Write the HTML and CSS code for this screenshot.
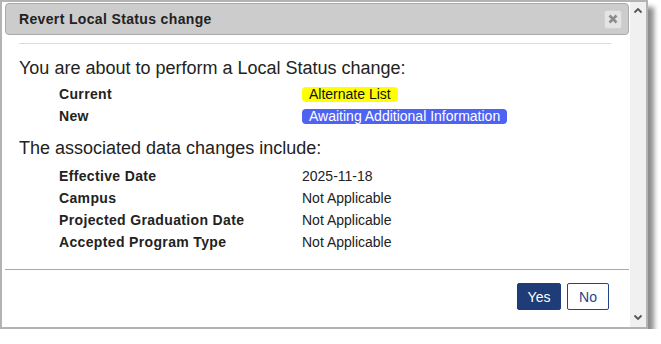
FILE: index.html
```html
<!DOCTYPE html>
<html>
<head>
<meta charset="utf-8">
<link rel="stylesheet" href="styles.css">
</head>
<body>
<div class="window">
  <div class="dialog">
    <div class="titlebar">
      <span class="title">Revert Local Status change</span>
      <span class="close"><svg width="10" height="10" viewBox="0 0 10 10"><path d="M1.5 1.5 L8.5 8.5 M8.5 1.5 L1.5 8.5" stroke="#8c8c8c" stroke-width="2.6" stroke-linecap="butt"/></svg></span>
    </div>
    <div class="body">
      <div class="sep-top"></div>
      <p class="heading">You are about to perform a Local Status change:</p>
      <div class="rows">
        <div class="label">Current</div><div class="value"><span class="badge badge-yellow">Alternate List</span></div>
        <div class="label">New</div><div class="value"><span class="badge badge-blue">Awaiting Additional Information</span></div>
      </div>
      <p class="heading heading-2">The associated data changes include:</p>
      <div class="rows rows-2">
        <div class="label">Effective Date</div><div class="value">2025-11-18</div>
        <div class="label">Campus</div><div class="value">Not Applicable</div>
        <div class="label">Projected Graduation Date</div><div class="value">Not Applicable</div>
        <div class="label">Accepted Program Type</div><div class="value">Not Applicable</div>
      </div>
    </div>
    <div class="sep-bottom"></div>
    <div class="footer">
      <button class="btn btn-primary">Yes</button>
      <button class="btn btn-default">No</button>
    </div>
  </div>
  <div class="scrollbar">
    <svg width="10" height="7" viewBox="0 0 10 7"><polyline points="1.5,5.5 5,2 8.5,5.5" fill="none" stroke="#555" stroke-width="1.8"/></svg>
    <svg width="10" height="7" viewBox="0 0 10 7"><polyline points="1.5,1.5 5,5 8.5,1.5" fill="none" stroke="#555" stroke-width="1.8"/></svg>
  </div>
</div>
</body>
</html>
```

FILE: styles.css
```css
html, body {
  margin: 0;
  padding: 0;
  background: #fff;
}
body {
  font-family: "Liberation Sans", Arial, sans-serif;
  color: #222;
}
.window {
  width: 648px;
  height: 329px;
  box-sizing: border-box;
  border: 2px solid #b3b3b3;
  display: flex;
  background: #fff;
  box-shadow: 6px 7px 5px rgba(0, 0, 0, 0.45);
}
.dialog {
  flex: 1;
  display: flex;
  flex-direction: column;
  min-width: 0;
}
.titlebar {
  margin: 1px 1px 0 3px;
  height: 32px;
  box-sizing: border-box;
  background: #cccccc;
  border: 1px solid #aaaaaa;
  border-radius: 4px;
  display: flex;
  align-items: center;
  justify-content: space-between;
  padding: 0 6px 0 13px;
}
.title {
  font-weight: bold;
  font-size: 14px;
  letter-spacing: 0.35px;
  color: #222;
}
.close {
  width: 18px;
  height: 19px;
  box-sizing: border-box;
  background: #e4e4e4;
  border: 1px solid #d2d2d2;
  border-radius: 3px;
  display: flex;
  align-items: center;
  justify-content: center;
}
.body {
  padding: 0 0 0 17px;
}
.sep-top {
  height: 0;
  border-top: 1px solid #dddddd;
  margin: 8px 19px 0 0;
}
.heading {
  margin: 13px 0 0 0;
  font-size: 18px;
  line-height: 22px;
}
.heading-2 {
  margin-top: 10px;
}
.rows {
  display: grid;
  grid-template-columns: 243px auto;
  grid-auto-rows: 22px;
  align-items: center;
  padding-left: 40px;
  margin-top: 4px;
  font-size: 14px;
}
.rows-2 {
  margin-top: 6px;
}
.label {
  font-weight: bold;
  letter-spacing: 0.35px;
}
.value {
  line-height: 22px;
}
.badge {
  display: inline-block;
  line-height: 15px;
  padding: 0 7px;
  border-radius: 4px;
}
.badge-yellow {
  background: #ffff00;
  color: #111;
}
.badge-blue {
  background: #4f63f2;
  color: #fff;
}
.sep-bottom {
  height: 0;
  border-top: 1px solid #a9a9a9;
  margin: 16px 1px 0 3px;
}
.footer {
  display: flex;
  justify-content: flex-end;
  gap: 6px;
  padding: 13px 21px 0 0;
}
.btn {
  font-family: "Liberation Sans", Arial, sans-serif;
  font-size: 14px;
  height: 27px;
  padding: 0;
  border-radius: 2px;
  cursor: pointer;
}
.btn-primary {
  width: 44px;
  background: #1e3c78;
  border: 1px solid #1e3c78;
  color: #fff;
}
.btn-default {
  width: 42px;
  background: #fff;
  border: 1px solid #23438a;
  color: #23438a;
}
.scrollbar {
  width: 16px;
  background: #f0f0f0;
  display: flex;
  flex-direction: column;
  justify-content: space-between;
  align-items: center;
  padding: 5px 0 6px;
  box-sizing: border-box;
}
```
